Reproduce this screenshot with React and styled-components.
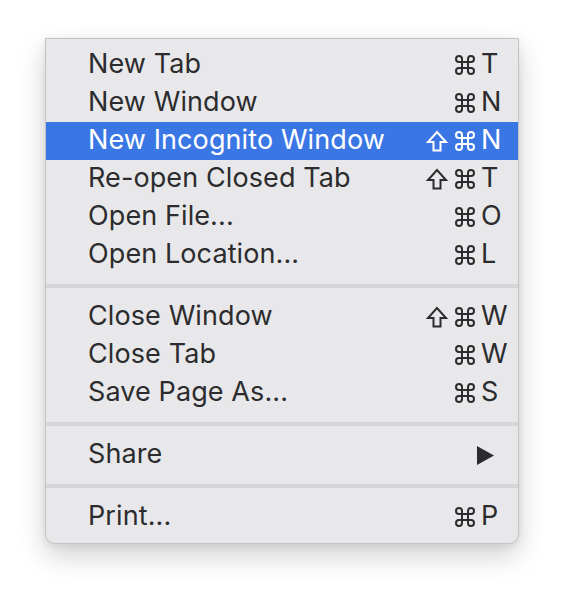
import React from 'react';
import styled, { createGlobalStyle } from 'styled-components';

const GlobalStyle = createGlobalStyle`
  html, body {
    margin: 0;
    padding: 0;
    background: #ffffff;
  }
  body {
    font-family: 'Inter', 'DejaVu Sans', sans-serif;
  }
`;

const Page = styled.div`
  width: 564px;
  height: 598px;
  padding: 38px 0 0 45px;
  box-sizing: border-box;
`;

const Menu = styled.div`
  width: 474px;
  box-sizing: border-box;
  padding: 7px 0 7px;
  background: #e8e8ea;
  border: 1px solid #c3c3c5;
  border-radius: 0 0 10px 10px;
  box-shadow: 0 12px 28px rgba(0, 0, 0, 0.18), 0 2px 8px rgba(0, 0, 0, 0.08);
  display: flex;
  flex-direction: column;
`;

const Row = styled.div`
  height: 38px;
  display: grid;
  grid-template-columns: 1fr 60px 34px;
  column-gap: 4px;
  align-items: center;
  padding: 0 3px 0 42px;
  background: ${({ active }) => (active ? '#3b77e4' : 'transparent')};
  color: ${({ active }) => (active ? '#ffffff' : '#2c2c2e')};
  font-size: 27px;
  letter-spacing: 0.1px;
`;

const Label = styled.span`
  white-space: nowrap;
  margin-top: -4px;
`;

const Mods = styled.span`
  display: flex;
  justify-content: flex-end;
  align-items: center;
  gap: 4px;
`;

const Key = styled.span`
  white-space: nowrap;
  margin-top: -4px;
`;

const Separator = styled.div`
  height: 24px;
  display: flex;
  align-items: center;

  &::after {
    content: '';
    flex: 1;
    height: 4px;
    background: #d6d6d8;
  }
`;

const Submenu = styled.span`
  grid-column: 2 / 4;
  justify-self: end;
  margin-right: 21px;
  display: flex;
`;

const Glyph = styled.svg`
  width: 24px;
  height: 24px;
  display: block;
`;

const Command = () => (
  <Glyph viewBox="0 0 24 24" fill="none" stroke="currentColor" strokeWidth="2" strokeLinecap="round" strokeLinejoin="round">
    <path d="M15 6v12a3 3 0 1 0 3-3H6a3 3 0 1 0 3 3V6a3 3 0 1 0-3 3h12a3 3 0 1 0-3-3" />
  </Glyph>
);

const Shift = () => (
  <Glyph viewBox="0 0 24 24" fill="none" stroke="currentColor" strokeWidth="2" strokeLinejoin="miter">
    <path d="M8.5 21.5v-8.5H3L12 3l9 10h-5.5v8.5h-7z" />
  </Glyph>
);

const Triangle = () => (
  <svg width="17" height="19" viewBox="0 0 17 19">
    <path d="M0 0L17 9.5L0 19Z" fill="#2c2c2e" />
  </svg>
);

const groups = [
  [
    { label: 'New Tab', key: 'T' },
    { label: 'New Window', key: 'N' },
    { label: 'New Incognito Window', key: 'N', shift: true, active: true },
    { label: 'Re-open Closed Tab', key: 'T', shift: true },
    { label: 'Open File...', key: 'O' },
    { label: 'Open Location...', key: 'L' },
  ],
  [
    { label: 'Close Window', key: 'W', shift: true },
    { label: 'Close Tab', key: 'W' },
    { label: 'Save Page As...', key: 'S' },
  ],
  [{ label: 'Share', submenu: true }],
  [{ label: 'Print...', key: 'P' }],
];

const Item = ({ item }) => (
  <Row active={item.active}>
    <Label>{item.label}</Label>
    {item.submenu ? (
      <Submenu><Triangle /></Submenu>
    ) : (
      <>
        <Mods>
          {item.shift && <Shift />}
          <Command />
        </Mods>
        <Key>{item.key}</Key>
      </>
    )}
  </Row>
);

const App = () => (
  <Page>
    <GlobalStyle />
    <Menu>
      {groups.map((group, i) => (
        <React.Fragment key={i}>
          {i > 0 && <Separator />}
          {group.map(item => <Item key={item.label} item={item} />)}
        </React.Fragment>
      ))}
    </Menu>
  </Page>
);

export default App;
